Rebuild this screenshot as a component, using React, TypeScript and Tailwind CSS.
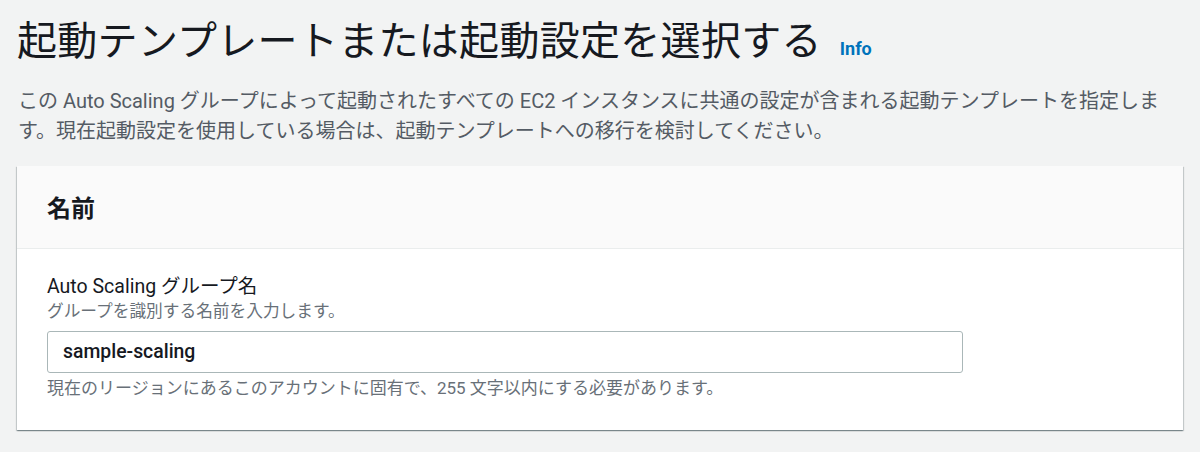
const font = '[font-family:Roboto,"Noto_Sans_CJK_JP",sans-serif]'

function FormField() {
  return (
    <div className="px-[30px] pt-[25px] pb-[30px]">
      <p className="text-[19.5px] leading-[26px] text-[#16191f]">Auto Scaling グループ名</p>
      <p className="text-[16.7px] leading-[24px] text-[#687078]">グループを識別する名前を入力します。</p>
      <div className="mt-[7px] flex h-[42px] w-[916px] items-center rounded-[3px] border border-[#aab7b8] bg-white px-[15px]">
        <span className="text-[19.4px] font-medium text-[#16191f]">sample-scaling</span>
      </div>
      <p className="mt-[3px] text-[17px] leading-[24px] text-[#687078]">
        現在のリージョンにあるこのアカウントに固有で、255 文字以内にする必要があります。
      </p>
    </div>
  )
}

export default function App() {
  return (
    <div className={`h-[452px] w-full overflow-hidden bg-[#f2f3f3] px-[17px] pt-[17px] ${font}`}>
      <div className="flex items-baseline">
        <h1 className="text-[40px] leading-[50px] font-normal tracking-[0.3px] text-[#16191f]">
          起動テンプレートまたは起動設定を選択する
        </h1>
        <a className="ml-[18px] text-[18px] font-bold text-[#0073bb]">Info</a>
      </div>
      <p className="mt-[19px] pl-[1px] pr-[4px] text-[20px] leading-[30px] text-[#545b64]">
        この Auto Scaling グループによって起動されたすべての EC2 インスタンスに共通の設定が含まれる起動テンプレートを指定します。現在起動設定を使用している場合は、起動テンプレートへの移行を検討してください。
      </p>
      <section className="mt-[20px] bg-white shadow-[0_1px_1px_0_rgba(0,28,36,0.3),1px_1px_1px_0_rgba(0,28,36,0.15),-1px_1px_1px_0_rgba(0,28,36,0.15)]">
        <header className="flex h-[83px] items-center border-b border-[#eaeded] bg-[#fafafa] px-[30px]">
          <h2 className="mt-[3px] text-[24px] font-bold text-[#16191f]">名前</h2>
        </header>
        <FormField />
      </section>
    </div>
  )
}
